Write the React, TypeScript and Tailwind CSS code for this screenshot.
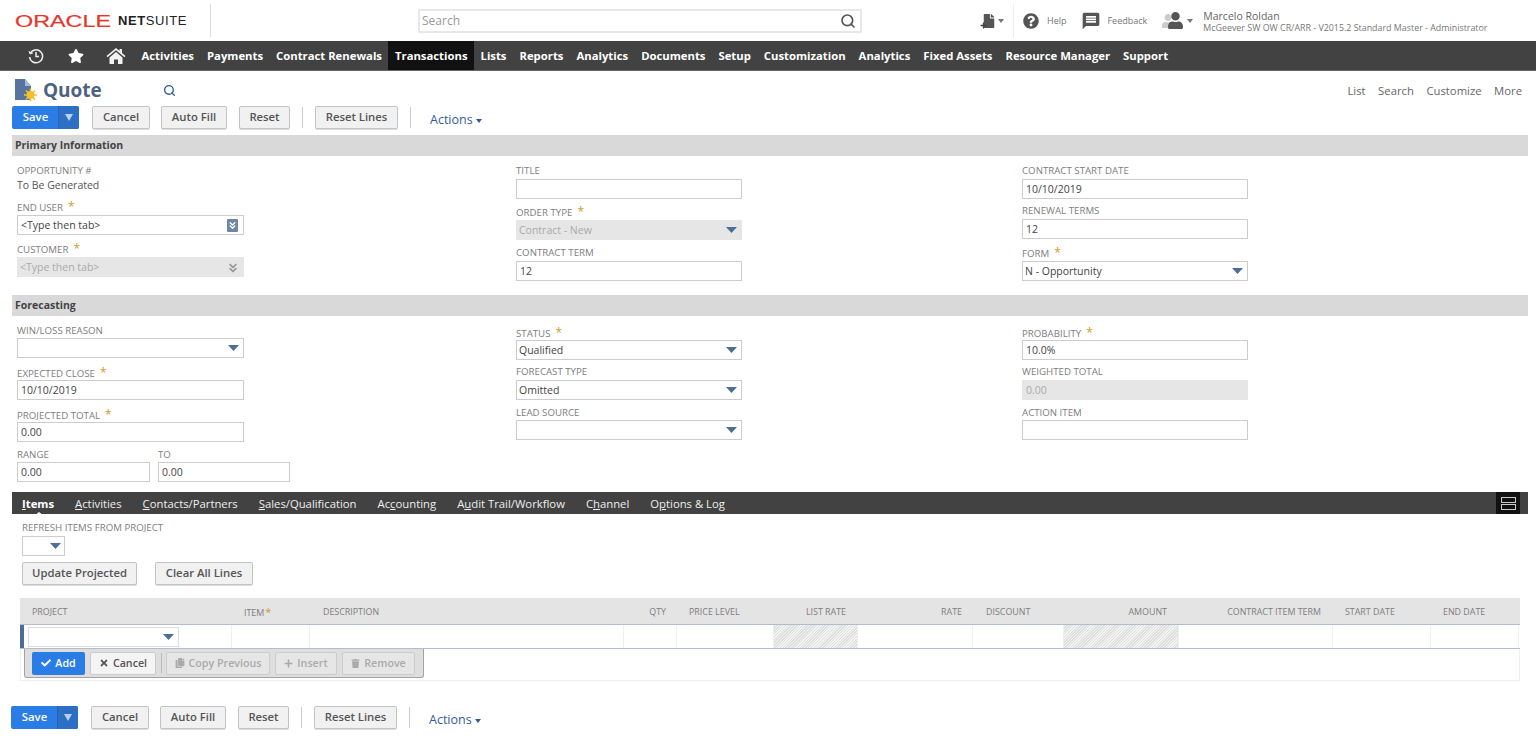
import React from 'react';
import { FaStar, FaCheck, FaTimes, FaCopy, FaPlus, FaTrash, FaQuestionCircle, FaUser, FaFile } from 'react-icons/fa';
import { MdMessage } from 'react-icons/md';
import { ChevronsDown, Search } from 'lucide-react';

const Arrow = () => (
  <svg width="11" height="6" viewBox="0 0 11 6" className="shrink-0"><path d="M0 0h11L5.5 6z" fill="#4d6d9a" /></svg>
);

const Label = ({ text, req, cls = '' }: { text: string; req?: boolean; cls?: string }) => (
  <div className={`h-[14px] text-[9.7px] leading-[14px] uppercase text-[#7d7d7d] whitespace-nowrap ${cls}`}>
    {text}
    {req && <span className="ml-[5px] text-[#d59a2c] text-[12px]">*</span>}
  </div>
);

const Input = ({ value, w = 'w-[226px]', gray }: { value?: string; w?: string; gray?: boolean }) => (
  <div className={`h-[20px] ${w} border px-[3px] text-[10.5px] leading-[19px] whitespace-nowrap ${gray ? 'bg-[#e6e6e6] border-[#e6e6e6] text-[#aaa]' : 'bg-white border-[#ccc] text-[#444]'}`}>
    {value}
  </div>
);

const Select = ({ value, gray, w = 'w-[226px]' }: { value?: string; gray?: boolean; w?: string }) => (
  <div className={`h-[20px] ${w} border pl-[2px] pr-[4px] flex items-center justify-between text-[10.5px] ${gray ? 'bg-[#e6e6e6] border-[#e6e6e6] text-[#aaa]' : 'bg-white border-[#ccc] text-[#444]'}`}>
    <span className="pt-[2px]">{value}</span>
    <Arrow />
  </div>
);

const Btn = ({ text, w }: { text: string; w: string }) => (
  <div className={`h-[23px] ${w} flex items-center justify-center rounded-[2px] border border-[#c4c4c4] bg-[#f1f1f1] shadow-[0_1px_0_#ddd] text-[11.3px] font-semibold text-[#555] whitespace-nowrap`}>
    {text}
  </div>
);

const ButtonRow = () => (
  <div className="flex items-center h-[24px]">
    <div className="flex h-[23px] w-[67px] rounded-[2px] overflow-hidden bg-[#2a7de4] text-white text-[11.3px] font-semibold">
      <div className="w-[46px] pl-[1px] flex items-center justify-center">Save</div>
      <div className="w-[21px] flex items-center justify-center bg-[#2c6fc4] border-l border-[#2363b4]">
        <svg width="8" height="7" viewBox="0 0 8 7"><path d="M0 0h8L4 7z" fill="#b9d2f2" /></svg>
      </div>
    </div>
    <div className="ml-[13px]"><Btn text="Cancel" w="w-[58px]" /></div>
    <div className="ml-[11px]"><Btn text="Auto Fill" w="w-[66px]" /></div>
    <div className="ml-[12px]"><Btn text="Reset" w="w-[51px]" /></div>
    <div className="ml-[12px] w-px h-[21px] bg-[#ccc]" />
    <div className="ml-[12px]"><Btn text="Reset Lines" w="w-[83px]" /></div>
    <div className="ml-[12px] w-px h-[21px] bg-[#ccc]" />
    <div className="ml-[19px] mt-[6px] flex items-center gap-[3px] text-[12.5px] text-[#2f5c9c]">
      Actions
      <svg width="6" height="4" viewBox="0 0 6 4" className="mt-[2px]"><path d="M0 0h6L3 4z" fill="#2f5c9c" /></svg>
    </div>
  </div>
);

const navItems = ['Activities', 'Payments', 'Contract Renewals', 'Transactions', 'Lists', 'Reports', 'Analytics', 'Documents', 'Setup', 'Customization', 'Analytics', 'Fixed Assets', 'Resource Manager', 'Support'];

const tabs: [string, string, string, boolean?][] = [
  ['', 'I', 'tems', true],
  ['', 'A', 'ctivities'],
  ['', 'C', 'ontacts/Partners'],
  ['', 'S', 'ales/Qualification'],
  ['Ac', 'c', 'ounting'],
  ['A', 'u', 'dit Trail/Workflow'],
  ['C', 'h', 'annel'],
  ['O', 'p', 'tions & Log'],
];

const cols = [
  { t: 'Project', c: 'pl-[12px]' },
  { t: 'Item', c: 'pl-[12px]', req: true },
  { t: 'Description', c: 'pl-[13px]' },
  { t: 'Qty', c: 'text-right pr-[11px]' },
  { t: 'Price Level', c: 'pl-[12px]' },
  { t: 'List Rate', c: 'text-right pr-[12px]' },
  { t: 'Rate', c: 'text-right pr-[11px]' },
  { t: 'Discount', c: 'pl-[13px]' },
  { t: 'Amount', c: 'text-right pr-[12px]' },
  { t: 'Contract Item Term', c: 'text-right pr-[12px]' },
  { t: 'Start Date', c: 'pl-[12px]' },
  { t: 'End Date', c: 'pl-[12px]' },
];

const hatch = 'bg-[repeating-linear-gradient(135deg,#dedede_0px,#dedede_1px,#f4f4f4_1px,#f4f4f4_2px)]';
const gridCols = 'grid-cols-[212px_78px_314px_53px_97px_84px_115px_91px_115px_154px_98px_88px]';

const ToolBtn = ({ icon, text, w, off }: { icon: React.ReactNode; text: string; w: string; off?: boolean }) => (
  <div className={`h-[23px] ${w} flex items-center justify-center gap-[4px] rounded-[2px] border text-[10.7px] font-semibold whitespace-nowrap ${off ? 'border-[#ccc] bg-[#e6e6e6] text-[#aaa]' : 'border-[#ccc] bg-[#f4f4f4] text-[#555]'}`}>
    {icon}
    {text}
  </div>
);

const App = () => {
  return (
    <div className="w-[1536px] h-[738px] overflow-hidden bg-white font-['Open_Sans',sans-serif]">
      {/* top bar */}
      <div className="h-[41px] flex items-center">
        <div className="ml-[15px] w-[196px] h-[33px] flex items-center border-r border-[#ddd]">
          <svg width="97" height="20" viewBox="0 0 97 20" className="overflow-visible">
            <text x="0" y="16" textLength="96" lengthAdjust="spacingAndGlyphs" fontFamily="Liberation Sans, sans-serif" fontSize="16.5" fill="#e8352b" stroke="#e8352b" strokeWidth="0.2">ORACLE</text>
          </svg>
          <span className="ml-[6px] text-[13px] tracking-[0.6px] text-[#222] font-['Liberation_Sans',sans-serif]"><b>NET</b>SUITE</span>
        </div>
        <div className="ml-[207px] w-[444px] h-[24px] border-2 border-[#e8e8e8] flex items-center justify-between pl-[2px] pr-[4px] text-[12px] text-[#999]">
          Search
          <Search size={16} strokeWidth={2.5} className="text-[#555]" />
        </div>
        <div className="ml-[120px] flex items-center text-[#555]">
          <div className="relative">
            <FaFile size={14} className="text-[#555]" />
            <FaPlus size={7} className="absolute -left-[2px] bottom-[-1px] text-[#444]" />
          </div>
          <svg width="6" height="4" viewBox="0 0 6 4" className="ml-[2px]"><path d="M0 0h6L3 4z" fill="#777" /></svg>
          <div className="ml-[9px] w-px h-[34px] bg-[#eee]" />
          <FaQuestionCircle size={16} className="ml-[9px] text-[#555]" />
          <span className="ml-[8px] text-[9px] text-[#777]">Help</span>
          <MdMessage size={20} className="ml-[15px] text-[#555]" />
          <span className="ml-[6px] text-[9px] text-[#777]">Feedback</span>
          <div className="relative ml-[14px] w-[24px] h-[18px]">
            <FaUser size={14} className="absolute left-0 top-[2px] text-[#ccc]" />
            <FaUser size={17} className="absolute left-[6px] top-0 text-[#555]" />
          </div>
          <svg width="6" height="4" viewBox="0 0 6 4" className="ml-[2px]"><path d="M0 0h6L3 4z" fill="#777" /></svg>
          <div className="ml-[10px] mt-[2px]">
            <div className="text-[10.5px] leading-[12px] text-[#666]">Marcelo Roldan</div>
            <div className="text-[8.9px] leading-[11px] text-[#777] whitespace-nowrap">McGeever SW OW CR/ARR - V2015.2 Standard Master - Administrator</div>
          </div>
        </div>
      </div>

      {/* nav */}
      <div className="h-[30px] bg-[#424242] border-b border-[#666] flex items-stretch text-white text-[11.3px] font-bold">
        <div className="w-[135px] flex items-center">
          <svg width="16" height="16" viewBox="0 0 16 16" className="ml-[28px]" fill="none" stroke="#eee" strokeWidth="1.5">
            <path d="M2.2 5.5A6.5 6.5 0 1 1 1.6 9" />
            <path d="M8 4v4.5h3" />
            <path d="M1 3l1 3 3-1" strokeWidth="1" />
          </svg>
          <FaStar size={16} className="ml-[24px] text-white" />
          <svg width="20" height="18" viewBox="0 0 20 18" className="ml-[22px]" fill="#f2f2f2">
            <path d="M10 1L0.5 9l1 1.2L10 3.2l8.500 7L19.500 9 16 6V2h-2.500v2z" />
            <path d="M3.500 10.500L10 5l6.500 5.500V17H12v-4.500H8V17H3.500z" />
          </svg>
        </div>
        {navItems.map((n, i) => (
          <div key={i} className={`flex items-center whitespace-nowrap px-[6.5px] pt-[2px] ${n === 'Transactions' ? 'bg-[#111]' : ''}`}>{n}</div>
        ))}
      </div>

      {/* title */}
      <div className="h-[34px] flex items-center justify-between">
        <div className="flex items-center ml-[15px] mt-[4px]">
          <svg width="22" height="22" viewBox="0 0 22 22">
            <path d="M0 0h10l6 7v14H0z" fill="#56749f" />
            <path d="M10 0l6 7h-6z" fill="#a9bbd4" />
            <circle cx="15.500" cy="16" r="4" fill="#f3c02f" />
            <path d="M15.500 9.500v13M9 16h13M11 11.500l9 9M20 11.500l-9 9" stroke="#f3c02f" strokeWidth="1.500" />
          </svg>
          <span className="ml-[6px] text-[19px] leading-[24px] font-bold text-[#4d6283]">Quote</span>
          <Search size={13} strokeWidth={2.5} className="ml-[61px] text-[#2c5a9c]" />
        </div>
        <div className="flex items-center gap-[12.5px] mr-[14px] mt-[6px] text-[11.3px] text-[#666]">
          <span>List</span>
          <span>Search</span>
          <span>Customize</span>
          <span>More</span>
        </div>
      </div>

      <div className="ml-[12px]"><ButtonRow /></div>

      {/* primary information */}
      <div className="mt-[6px] ml-[12px] w-[1516px] h-[21px] bg-[#d9d9d9] px-[3px] text-[10.5px] leading-[20px] font-bold text-[#444]">Primary Information</div>
      <div className="flex h-[139px] pt-[8px]">
        <div className="ml-[17px] w-[499px]">
          <Label text="Opportunity #" />
          <div className="h-[14px] text-[10.5px] leading-[14px] text-[#555]">To Be Generated</div>
          <Label text="End User" req cls="mt-[8px] mb-[1px]" />
          <div className="h-[20px] w-[227px] border border-[#ccc] px-[3px] pt-[1px] flex items-center justify-between text-[10.5px] text-[#444]">
            &lt;Type then tab&gt;
            <div className="w-[11px] h-[13px] mr-[2px] rounded-[1px] bg-[#6d87a8] flex items-center justify-center">
              <ChevronsDown size={11} strokeWidth={3} className="text-white" />
            </div>
          </div>
          <Label text="Customer" req cls="mt-[7px] mb-[1px]" />
          <div className="h-[20px] w-[227px] bg-[#e6e6e6] px-[3px] pt-[1px] flex items-center justify-between text-[10.5px] text-[#aaa]">
            &lt;Type then tab&gt;
            <ChevronsDown size={14} strokeWidth={3} className="text-[#999] mr-[1px]" />
          </div>
        </div>
        <div className="w-[506px]">
          <Label text="Title" cls="mb-[1px]" />
          <Input />
          <Label text="Order Type" req cls="mt-[6px] mb-[1px]" />
          <Select value="Contract - New" gray />
          <Label text="Contract Term" cls="mt-[6px] mb-[1px]" />
          <Input value="12" />
        </div>
        <div>
          <Label text="Contract Start Date" cls="mb-[1px]" />
          <Input value="10/10/2019" />
          <Label text="Renewal Terms" cls="mt-[5px] mb-[1px]" />
          <Input value="12" />
          <Label text="Form" req cls="mt-[7px] mb-[1px]" />
          <Select value="N - Opportunity" />
        </div>
      </div>

      {/* forecasting */}
      <div className="ml-[12px] w-[1516px] h-[21px] bg-[#d9d9d9] px-[3px] text-[10.5px] leading-[20px] font-bold text-[#444]">Forecasting</div>
      <div className="flex h-[176px] pt-[8px]">
        <div className="ml-[17px] w-[499px]">
          <Label text="Win/Loss Reason" />
          <Select w="w-[227px]" />
          <Label text="Expected Close" req cls="mt-[8px]" />
          <Input value="10/10/2019" w="w-[227px]" />
          <Label text="Projected Total" req cls="mt-[8px]" />
          <Input value="0.00" w="w-[227px]" />
          <div className="flex gap-[8px] mt-[6px]">
            <div>
              <Label text="Range" />
              <Input value="0.00" w="w-[133px]" />
            </div>
            <div>
              <Label text="To" />
              <Input value="0.00" w="w-[132px]" />
            </div>
          </div>
        </div>
        <div className="w-[506px]">
          <Label text="Status" req cls="mt-[2px]" />
          <Select value="Qualified" />
          <Label text="Forecast Type" cls="mt-[5px] mb-[1px]" />
          <Select value="Omitted" />
          <Label text="Lead Source" cls="mt-[6px]" />
          <Select />
        </div>
        <div>
          <Label text="Probability" req cls="mt-[2px]" />
          <Input value="10.0%" />
          <Label text="Weighted Total" cls="mt-[5px] mb-[1px]" />
          <Input value="0.00" gray />
          <Label text="Action Item" cls="mt-[6px]" />
          <Input />
        </div>
      </div>

      {/* tabs */}
      <div className="ml-[12px] w-[1516px] h-[22px] bg-[#424242] flex items-center justify-between text-[11.3px] text-[#eee]">
        <div className="flex items-center gap-[21px] ml-[10px] pt-[2px]">
          {tabs.map(([pre, u, post, active], i) => (
            <div key={i} className={`relative whitespace-nowrap ${active ? 'font-bold text-white' : ''}`}>
              {pre}<span className="underline">{u}</span>{post}
              {active && <div className="absolute left-[12px] -bottom-[4px] w-0 h-0 border-x-[5px] border-x-transparent border-b-[4px] border-b-white" />}
            </div>
          ))}
        </div>
        <div className="w-[24px] h-[22px] bg-[#111] flex flex-col items-center justify-center gap-[1px] mr-[8px]">
          <div className="w-[15px] h-[6px] border border-[#ccc]" />
          <div className="w-[15px] h-[6px] border border-[#ccc]" />
        </div>
      </div>
      <div className="ml-[22px] mt-[7px]">
        <Label text="Refresh Items From Project" />
        <div className="mt-[1px] w-[43px] h-[20px] border border-[#ccc] flex items-center justify-end pr-[3px]"><Arrow /></div>
        <div className="flex gap-[18px] mt-[6px]">
          <Btn text="Update Projected" w="w-[115px]" />
          <Btn text="Clear All Lines" w="w-[98px]" />
        </div>
      </div>

      {/* items table */}
      <div className="ml-[20px] mt-[13px] w-[1500px]">
        <div className={`grid ${gridCols} h-[26px] bg-[#e4e4e4] text-[8.9px] leading-[28px] uppercase text-[#7d7d7d]`}>
          {cols.map((c, i) => (
            <div key={i} className={`whitespace-nowrap ${c.c}`}>
              {c.t}
              {c.req && <span className="ml-[1px] text-[#d59a2c] text-[11px]">*</span>}
            </div>
          ))}
        </div>
        <div className={`grid ${gridCols} h-[25px] border-y border-[#b3bccb]`}>
          {cols.map((c, i) => (
            <div key={i} className={`border-r border-[#eee] ${c.t === 'List Rate' || c.t === 'Amount' ? hatch : ''}`}>
              {i === 0 && (
                <div className="h-full border-l-[4px] border-[#4d6a9a] pl-[4px] flex items-center">
                  <div className="w-[151px] h-[20px] border border-[#ddd] flex items-center justify-end pr-[4px]"><Arrow /></div>
                </div>
              )}
            </div>
          ))}
        </div>
        <div className="h-[32px] border-b border-r border-l border-[#eee]">
          <div className="ml-[3px] w-[400px] h-[29px] bg-[#dedede] border border-t-0 border-[#a3a3a3] rounded-b-[3px] flex items-center pl-[7px]">
            <div className="h-[23px] w-[53px] flex items-center justify-center gap-[4px] rounded-[2px] bg-[#2a7de4] text-white text-[10.7px] font-semibold">
              <FaCheck size={10} />Add
            </div>
            <div className="ml-[5px]"><ToolBtn icon={<FaTimes size={10} />} text="Cancel" w="w-[66px]" /></div>
            <div className="ml-[5px] w-px h-[20px] bg-[#bbb]" />
            <div className="ml-[4px]"><ToolBtn off icon={<FaCopy size={10} />} text="Copy Previous" w="w-[104px]" /></div>
            <div className="ml-[5px]"><ToolBtn off icon={<FaPlus size={9} />} text="Insert" w="w-[62px]" /></div>
            <div className="ml-[5px]"><ToolBtn off icon={<FaTrash size={9} />} text="Remove" w="w-[73px]" /></div>
          </div>
        </div>
      </div>

      <div className="ml-[11px] mt-[24px]"><ButtonRow /></div>
    </div>
  );
};

export default App;
